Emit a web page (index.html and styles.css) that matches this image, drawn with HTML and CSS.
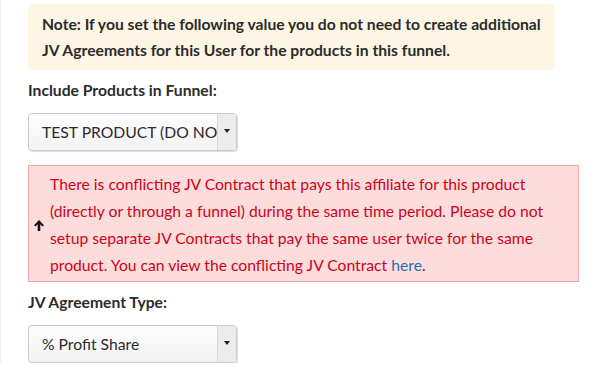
FILE: index.html
```html
<!DOCTYPE html>
<html>
<head>
<meta charset="utf-8">
<link rel="stylesheet" href="styles.css">
</head>
<body>
<div class="page">
  <div class="note">Note: If you set the following value you do not need to create additional JV Agreements for this User for the products in this funnel.</div>
  <div class="label">Include Products in Funnel:</div>
  <div class="select">
    <div class="select-value">TEST PRODUCT (DO NOT USE)</div>
    <div class="select-btn"><span class="caret"></span></div>
  </div>
  <div class="alert">
    <svg class="alert-icon" width="10" height="11" viewBox="0 0 10 11"><path d="M5 0 L10 5.2 L8.4 6.4 L6.3 4.3 L6.3 11 L3.7 11 L3.7 4.3 L1.6 6.4 L0 5.2 Z" fill="#111"/></svg>
    <div class="alert-text">There is conflicting JV Contract that pays this affiliate for this product (directly or through a funnel) during the same time period. Please do not setup separate JV Contracts that pay the same user twice for the same product. You can view the conflicting JV Contract <a href="#">here</a>.</div>
  </div>
  <div class="label">JV Agreement Type:</div>
  <div class="select">
    <div class="select-value">% Profit Share</div>
    <div class="select-btn"><span class="caret"></span></div>
  </div>
</div>
</body>
</html>
```
FILE: styles.css
```css
html, body { margin: 0; padding: 0; background: #fff; }
body { font-family: Lato, "Open Sans", sans-serif; color: #333; }
.page { padding: 4px 0 0 27px; border-left: 1px solid #f2f2f2; margin-left: 0; }
.note {
  width: 527px; box-sizing: border-box;
  background: #fdf6e4; border-radius: 5px;
  padding: 7px 8px 7px 14px; font-weight: bold; font-size: 15.7px; line-height: 26px; color: #2b2b2b;
}
.label { margin-top: 10px; font-weight: bold; font-size: 15.7px; line-height: 20px; color: #2b2b2b; }
.select {
  margin-top: 13px; width: 209px; height: 38px; box-sizing: border-box;
  border: 1px solid #c9c9c9; border-radius: 4px; display: flex; overflow: hidden;
  background: linear-gradient(#fdfdfd, #f3f3f3);
  box-shadow: 1px 1px 1px rgba(0,0,0,0.14);
}
.select-value {
  flex: 1; overflow: hidden; white-space: nowrap; padding-left: 13px;
  font-size: 15.7px; line-height: 36px; color: #2b2b2b;
}
.select-btn {
  width: 18px; border-left: 1px solid #d6d6d6; background: #ececec;
  display: flex; align-items: center; justify-content: center;
}
.caret { width: 0; height: 0; border-left: 3.5px solid transparent; border-right: 3.5px solid transparent; border-top: 4px solid #222; margin-top: -2px; }
.alert {
  margin-top: 14px; width: 551px; box-sizing: border-box;
  background: #fddcdc; border: 1px solid #f4a6a6;
  display: flex; align-items: center; padding: 5px 0 2px 5px;
}
.alert-icon { flex: none; margin-right: 6px; margin-top: 0; }
.alert-text { color: #d0021b; font-size: 15.7px; line-height: 27px; }
.alert-text a { color: #1f6fb2; text-decoration: none; }
```
